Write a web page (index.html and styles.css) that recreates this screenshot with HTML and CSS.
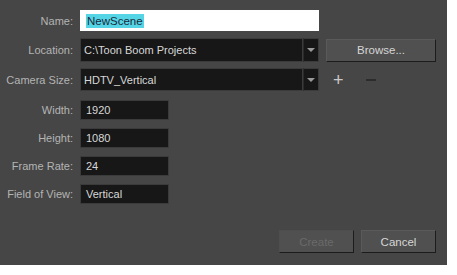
FILE: index.html
```html
<!DOCTYPE html>
<html lang="en">
<head>
    <meta charset="UTF-8">
    <title>New Scene</title>
    <link rel="stylesheet" href="styles.css">
</head>
<body>

<div class="dialog">
    <div class="row row-name">
        <label class="label">Name:</label>
        <div class="field field-name"><span class="selected">NewScene</span></div>
    </div>

    <div class="row row-location">
        <label class="label">Location:</label>
        <div class="combo">
            <div class="field combo-text">C:\Toon Boom Projects</div>
            <div class="combo-arrow"></div>
        </div>
        <button class="btn btn-browse">Browse...</button>
    </div>

    <div class="row row-camera">
        <label class="label">Camera Size:</label>
        <div class="combo">
            <div class="field combo-text">HDTV_Vertical</div>
            <div class="combo-arrow"></div>
        </div>
        <span class="icon-btn plus">+</span>
        <span class="icon-btn minus"></span>
    </div>

    <div class="row row-small">
        <label class="label">Width:</label>
        <div class="field field-small">1920</div>
    </div>

    <div class="row row-small">
        <label class="label">Height:</label>
        <div class="field field-small">1080</div>
    </div>

    <div class="row row-small">
        <label class="label">Frame Rate:</label>
        <div class="field field-small">24</div>
    </div>

    <div class="row row-small">
        <label class="label">Field of View:</label>
        <div class="field field-small">Vertical</div>
    </div>

    <div class="actions">
        <button class="btn btn-disabled">Create</button>
        <button class="btn">Cancel</button>
    </div>
</div>

</body>
</html>
```

FILE: styles.css
```css
:root {
    --panel: #464646;
    --field: #171717;
    --field-border: #3b3b3b;
    --label: #b4b4b4;
    --text: #d8d8d8;
}

body {
    margin: 0;
    background-color: #ffffff;
    font-family: "Liberation Sans", Arial, sans-serif;
    font-size: 11px;
}

.dialog {
    width: 447px;
    height: 265px;
    box-sizing: border-box;
    padding-top: 10px;
    background-color: var(--panel);
    display: flex;
    flex-direction: column;
}

.row {
    display: flex;
    align-items: center;
}

.label {
    width: 80px;
    padding-right: 7px;
    box-sizing: border-box;
    text-align: right;
    color: var(--label);
}

.field {
    box-sizing: border-box;
    background-color: var(--field);
    border: 1px solid var(--field-border);
    color: var(--text);
    display: flex;
    align-items: center;
    padding-left: 5px;
    white-space: nowrap;
}

.field-name {
    width: 239px;
    height: 21px;
    background-color: #ffffff;
    border-color: #ffffff;
    color: #1a2a3a;
    font-size: 11.5px;
}

.selected {
    background-color: #55d4e6;
    padding: 0 1px;
    line-height: 14px;
}

.row-location {
    margin-top: 7px;
}

.row-camera {
    margin-top: 6px;
}

.combo {
    display: flex;
    height: 24px;
    width: 239px;
}

.row-camera .combo {
    height: 23px;
}

.combo-text {
    flex: 1;
    height: 100%;
    padding-left: 3px;
}

.combo-arrow {
    width: 16px;
    height: 100%;
    box-sizing: border-box;
    background-color: var(--field);
    border: 1px solid var(--field-border);
    border-left: 1px solid #2a2a2a;
    display: flex;
    align-items: center;
    justify-content: center;
}

.combo-arrow::before {
    content: "";
    border-left: 4px solid transparent;
    border-right: 4px solid transparent;
    border-top: 4px solid #9a9a9a;
}

.btn {
    box-sizing: border-box;
    height: 23px;
    background-color: #505050;
    border: 1px solid #5a5a5a;
    border-right-color: #1c1c1c;
    border-bottom-color: #1c1c1c;
    color: #d6d6d6;
    font-family: inherit;
    font-size: 11.5px;
    padding: 0;
}

.btn-browse {
    width: 110px;
    margin-left: 7px;
}

.icon-btn {
    color: #c8c8c8;
    font-size: 18px;
    line-height: 1;
}

.plus {
    margin-left: 14px;
}

.minus {
    width: 10px;
    height: 2px;
    background-color: #2c2c2c;
    margin-left: 22px;
}

.row-small {
    margin-top: 8px;
}

.row-camera + .row-small {
    margin-top: 9px;
}

.field-small {
    width: 89px;
    height: 20px;
}

.actions {
    margin-top: auto;
    margin-bottom: 12px;
    display: flex;
    justify-content: flex-end;
    gap: 7px;
    padding-right: 11px;
}

.actions .btn {
    width: 75px;
}

.btn-disabled {
    color: #6a6a6a;
    border-color: #4e4e4e #1c1c1c #1c1c1c #4e4e4e;
}
```
